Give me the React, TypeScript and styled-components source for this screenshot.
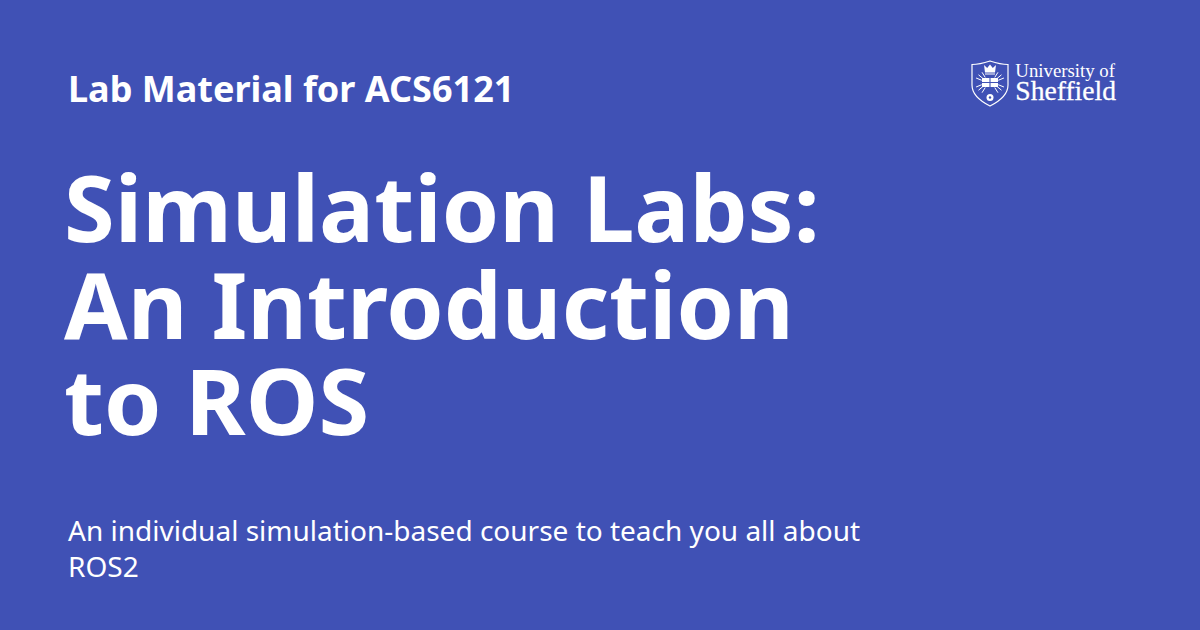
import React from 'react';
import styled, { createGlobalStyle } from 'styled-components';

const Global = createGlobalStyle`
  html, body { margin: 0; padding: 0; background: #4051b5; }
`;

const Card = styled.div`
  width: 1200px;
  height: 630px;
  box-sizing: border-box;
  background: #4051b5;
  color: #fff;
  font-family: "Noto Sans", sans-serif;
  padding: 64px 84px 42px 68px;
  display: flex;
  flex-direction: column;
  overflow: hidden;
`;
const Top = styled.div`
  display: flex;
  justify-content: space-between;
  align-items: flex-start;
  height: 51px;
`;
const Site = styled.div`
  font-size: 36px;
  font-weight: 700;
  line-height: 49px;
`;
const Logo = styled.div`
  display: flex;
  align-items: center;
  gap: 6px;
  margin-top: -4px;
`;
const LogoText = styled.div`
  font-family: "Liberation Serif", serif;
  color: #fff;
  margin-top: -1px;
`;
const LogoSmall = styled.div`
  font-size: 18.8px;
  line-height: 15px;
`;
const LogoBig = styled.div`
  font-size: 27.6px;
  line-height: 25px;
  -webkit-text-stroke: 0.3px #fff;
`;
const Title = styled.h1`
  margin: 44px 0 0 -4px;
  font-size: 92px;
  font-weight: 700;
  line-height: 96.6px;
  max-width: 800px;
`;
const Description = styled.p`
  margin: 63.7px 0 0;
  font-size: 28px;
  line-height: 36px;
  max-width: 820px;
`;

const rays = [-58, -40, -22, 22, 40, 58, 122, 140, 158, 202, 220, 238];

function Shield() {
  return (
    <svg width="38" height="47" viewBox="0 0 38 47" fill="none" stroke="#fff">
      <path d="M1 4.5C7 4.5 13 3 19 1c6 2 12 3.500 18 3.500V25c0 9-8 16-18 21C9 41 1 34 1 25z" strokeWidth="1.2" />
      <path d="M13 5l3.200 3 2.800-3.500 2.800 3.500 3.200-3-1 7.500h-10z" fill="#fff" stroke="none" />
      <path d="M14 14h10" strokeWidth="1" />
      {rays.map((a) => {
        const r = (a * Math.PI) / 180;
        return (
          <line
            key={a}
            x1={19 + 9 * Math.cos(r)}
            y1={22.5 + 6 * Math.sin(r)}
            x2={19 + 15 * Math.cos(r)}
            y2={22.5 + 12 * Math.sin(r)}
            strokeWidth="1"
          />
        );
      })}
      <rect x="11" y="18" width="16" height="9" fill="#fff" stroke="none" />
      <path d="M19 18v9M11 22.500h16" stroke="#4051b5" strokeWidth="1.1" />
      <circle cx="19" cy="37.500" r="3.500" fill="#fff" stroke="none" />
      <circle cx="19" cy="37.500" r="1.200" fill="#4051b5" stroke="none" />
    </svg>
  );
}

export default function App() {
  return (
    <Card>
      <Global />
      <Top>
        <Site>Lab Material for ACS6121</Site>
        <Logo>
          <Shield />
          <LogoText>
            <LogoSmall>University of</LogoSmall>
            <LogoBig>Sheffield</LogoBig>
          </LogoText>
        </Logo>
      </Top>
      <Title>Simulation Labs: An Introduction to ROS</Title>
      <Description>An individual simulation-based course to teach you all about ROS2</Description>
    </Card>
  );
}
